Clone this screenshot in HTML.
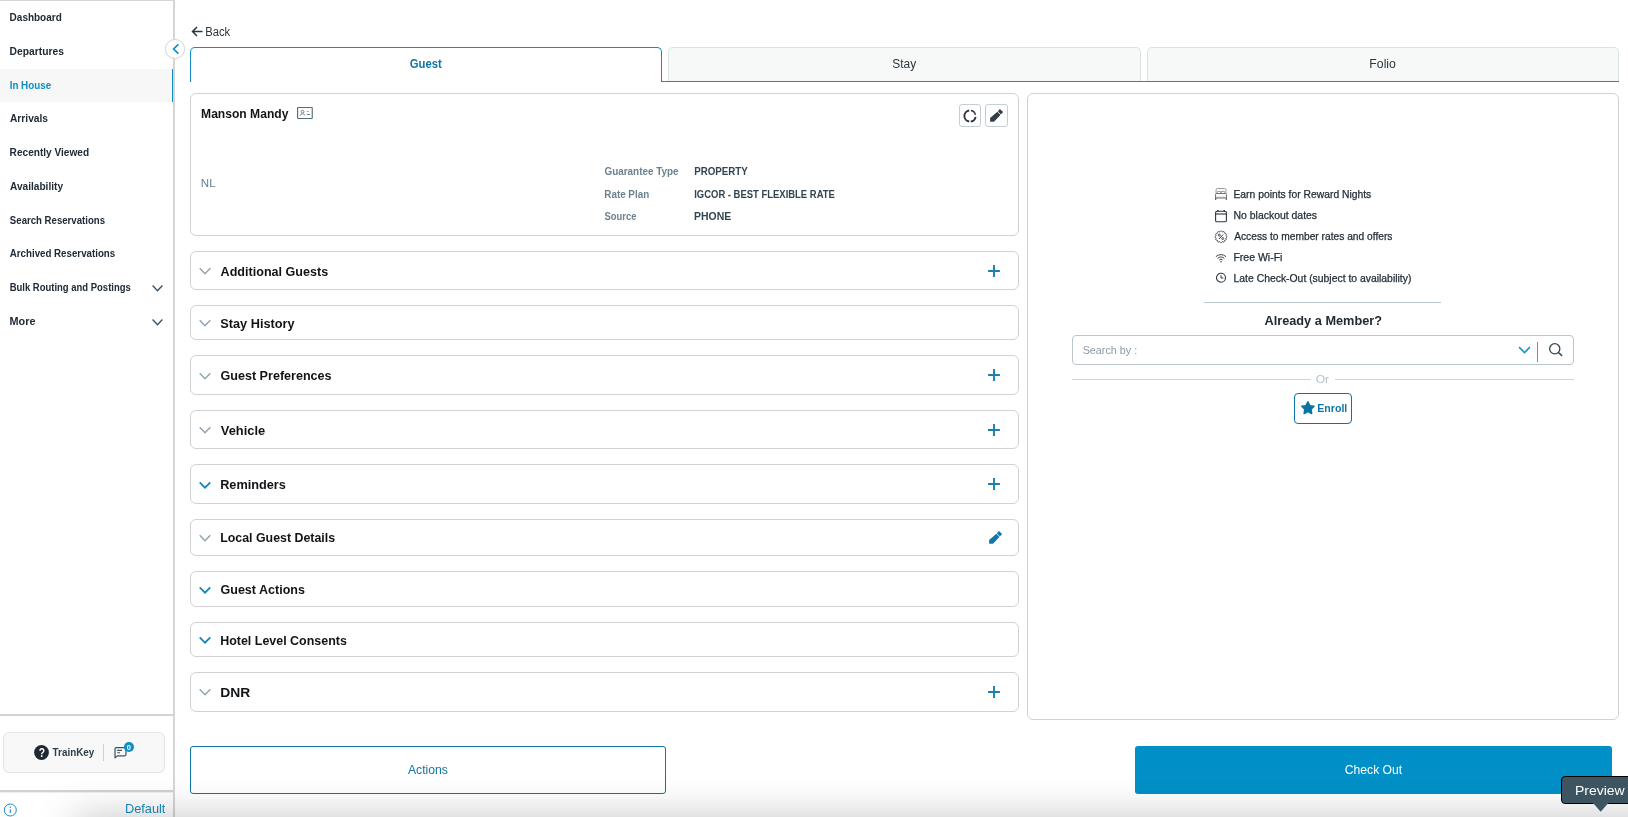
<!DOCTYPE html>
<html lang="en"><head><meta charset="utf-8"><title>Guest - In House</title>
<style>
html,body{margin:0;padding:0;background:#fff;}
body{width:1628px;height:817px;overflow:hidden;font-family:"Liberation Sans",sans-serif;}
#root{position:relative;width:1628px;height:817px;overflow:hidden;background:#fff;}
#root div,#root svg{position:absolute;box-sizing:border-box;}
.t{left:0;line-height:20px;height:20px;white-space:nowrap;transform-origin:0 50%;font-family:"Liberation Sans",sans-serif;}
.card{border:1px solid #d2d2d2;border-radius:6px;background:#fff;}
.tab{border:1px solid #dde2e3;border-bottom:none;border-radius:5px 5px 0 0;background:#f7f8f8;}
#fade{left:75px;top:817px;width:1700px;height:60px;box-shadow:0 0 40px rgba(0,0,0,0.23);pointer-events:none;}
#texts{left:0;top:0;width:1628px;height:817px;will-change:transform;}

</style></head><body>
<div id="root">
<!-- top hairline -->
<div style="left:0;top:0;width:175px;height:1px;background:#d6d6d6;"></div>
<!-- sidebar -->
<div style="left:0;top:69px;width:173px;height:33px;background:#f7f7f7;"></div>
<div style="left:171.6px;top:69px;width:1.6px;height:33px;background:#0f8dc4;"></div>
<div style="left:173px;top:0;width:2px;height:817px;background:#d5d5d5;"></div>
<div style="left:0;top:714px;width:173px;height:2px;background:#d3d3d3;"></div>
<div style="left:0;top:790px;width:173px;height:2px;background:#d1d1d1;"></div>
<div style="left:0;top:792px;width:173px;height:1px;background:#eeeeee;"></div>
<!-- sidebar chevrons -->
<svg style="left:151px;top:283px;" width="13" height="11" viewBox="0 0 13 11"><path d="M1.6 2.6 L6.5 7.8 L11.4 2.6" fill="none" stroke="#3b5068" stroke-width="1.4"/></svg>
<svg style="left:151px;top:316.9px;" width="13" height="11" viewBox="0 0 13 11"><path d="M1.6 2.6 L6.5 7.8 L11.4 2.6" fill="none" stroke="#3b5068" stroke-width="1.4"/></svg>
<!-- collapse button -->
<div style="left:165.2px;top:39px;width:19.6px;height:19.6px;border-radius:50%;background:#fff;border:1px solid #d4d4d4;"></div>
<svg style="left:168.5px;top:42.2px;" width="14" height="14" viewBox="0 0 14 14"><path d="M9.4 2.4 L4.6 7 L9.4 11.6" fill="none" stroke="#0f8dc4" stroke-width="1.7"/></svg>
<!-- trainkey box -->
<div style="left:3px;top:732px;width:162px;height:41px;background:#f8f8f8;border:1px solid #e2e7e9;border-radius:6px;"></div>
<svg style="left:34px;top:744.8px;" width="15" height="15" viewBox="0 0 15 15"><circle cx="7.5" cy="7.5" r="7.4" fill="#1f2933"/></svg>
<div style="left:103px;top:744px;width:1px;height:17px;background:#d2d2d2;"></div>
<svg style="left:113px;top:746px;" width="15" height="14" viewBox="0 0 15 14"><path d="M3.2 1.7 H11.8 Q13 1.7 13 2.9 V8.6 Q13 9.8 11.8 9.8 H4.6 L2 11.9 V2.9 Q2 1.7 3.2 1.7 Z" fill="none" stroke="#3d5561" stroke-width="1.2" stroke-linejoin="round"/><path d="M4.2 4.4 H9 M4.2 6.8 H7" stroke="#3d5561" stroke-width="1.1"/></svg>
<div style="left:123.8px;top:742.2px;width:10px;height:10px;border-radius:50%;background:#0f8dc4;"></div>
<!-- info icon -->
<svg style="left:3px;top:802.5px;" width="15" height="15" viewBox="0 0 15 15"><circle cx="7.3" cy="7" r="6" fill="none" stroke="#1b8cc4" stroke-width="1"/><path d="M7.3 6.2 V10" stroke="#1b8cc4" stroke-width="1.1"/><circle cx="7.3" cy="4.3" r="0.7" fill="#1b8cc4"/></svg>

<!-- back arrow -->
<svg style="left:190px;top:25px;" width="14" height="13" viewBox="0 0 14 13"><path d="M12.5 6.5 H2.8 M7 2 L2.5 6.5 L7 11" fill="none" stroke="#2b3640" stroke-width="1.5"/></svg>

<!-- tabs -->
<div class="tab" style="left:668px;top:47px;width:473px;height:34.5px;"></div>
<div class="tab" style="left:1147px;top:47px;width:472px;height:34.5px;"></div>
<div style="left:661px;top:80.6px;width:958px;height:1.3px;background:#0f8dc4;"></div>
<div style="left:190px;top:46.8px;width:472px;height:35.2px;border:1.3px solid #0f8dc4;border-bottom:none;border-radius:5px 5px 0 0;background:#fff;"></div>

<!-- guest card -->
<div class="card" style="left:190px;top:93px;width:829px;height:143px;"></div>
<!-- id-card icon -->
<svg style="left:296px;top:106px;" width="18" height="14" viewBox="0 0 18 14"><rect x="1.6" y="1.45" width="14.65" height="11" rx="0.6" fill="none" stroke="#566e7b" stroke-width="1.15"/><circle cx="6.5" cy="5.7" r="1.45" fill="none" stroke="#566e7b" stroke-width="0.8"/><path d="M4.2 9.7 C4.6 7.2 8.4 7.2 8.9 9.5" fill="none" stroke="#566e7b" stroke-width="0.85"/><path d="M10.5 5.5 H13" stroke="#8fa1ab" stroke-width="0.8"/><path d="M10.8 8.4 H14.2" stroke="#566e7b" stroke-width="0.9"/></svg>
<!-- card buttons -->
<div style="left:959px;top:104px;width:22px;height:23px;border:1px solid #c3ced5;border-radius:3px;background:#fff;"></div>
<div style="left:985px;top:104px;width:23px;height:23px;border:1px solid #c3ced5;border-radius:3px;background:#fff;"></div>
<svg style="left:962.3px;top:107.5px;" width="16" height="16" viewBox="0 0 16 16"><path d="M7.22 2.45 A5.6 5.6 0 0 0 7.22 13.55" fill="none" stroke="#2b3440" stroke-width="1.9"/><path d="M8.97 2.49 A5.6 5.6 0 0 1 13.48 6.84" fill="none" stroke="#2b3440" stroke-width="1.3"/><path d="M13.55 8.78 A5.6 5.6 0 0 1 8.78 13.55" fill="none" stroke="#2b3440" stroke-width="1.9"/></svg>
<svg style="left:988.9px;top:108.05px;" width="16" height="16" viewBox="0 0 16 16"><path d="M1.1 10.1 L8.4 3.7 L11.4 7 L5 13.8 L1.6 13.8 Q1.1 13.8 1.1 13.3 Z" fill="#333d47"/><path d="M8.9 3.25 L10.9 1.05 L14.1 4.1 L11.9 6.55 Z" fill="#333d47"/></svg>

<!-- right panel -->
<div class="card" style="left:1027px;top:93px;width:592px;height:627px;"></div>
<div style="left:1204px;top:301.9px;width:237px;height:1px;background:#b9c6cd;"></div>
<div style="left:1072px;top:335.3px;width:502px;height:29.5px;border:1px solid #b9c6cd;border-radius:4px;background:#fff;"></div>
<svg style="left:1517px;top:344px;" width="15" height="12" viewBox="0 0 15 12"><path d="M2.1 3.1 L7.5 8.6 L12.9 3.1" fill="none" stroke="#1593ca" stroke-width="1.5"/></svg>
<div style="left:1537px;top:342px;width:1px;height:20px;background:#7a8e99;"></div>
<svg style="left:1547px;top:342px;" width="16" height="16" viewBox="0 0 16 16"><circle cx="7.75" cy="6.8" r="5.1" fill="none" stroke="#2f4a57" stroke-width="1.3"/><path d="M11.4 10.5 L14.6 13.4" stroke="#2f4a57" stroke-width="1.5" stroke-linecap="round"/></svg>
<div style="left:1072px;top:378.7px;width:239px;height:1px;background:#cdd5d9;"></div>
<div style="left:1334.5px;top:378.7px;width:239.5px;height:1px;background:#cdd5d9;"></div>
<div style="left:1294px;top:393px;width:58px;height:31px;border:1px solid #0975a5;border-radius:4px;background:#fff;"></div>
<svg style="left:1300px;top:400px;" width="16" height="16" viewBox="0 0 16 16"><path d="M7.90 1.90 L9.84 5.63 L13.99 6.32 L11.04 9.32 L11.66 13.48 L7.90 11.60 L4.14 13.48 L4.76 9.32 L1.81 6.32 L5.96 5.63 Z" fill="#0975a5" stroke="#0975a5" stroke-width="1.5" stroke-linejoin="round"/></svg>

<!-- feature icons -->
<svg style="left:1214px;top:187px;" width="14" height="14" viewBox="0 0 14 14"><path d="M2 6.5 V3 Q2 1.5 3.5 1.5 H10.5 Q12 1.5 12 3 V6.5" fill="none" stroke="#7b8287" stroke-width="0.8"/><path d="M3.2 6.3 V5.2 Q3.2 4.4 4 4.4 H6 Q6.8 4.4 6.8 5.2 V6.3 M7.2 6.3 V5.2 Q7.2 4.4 8 4.4 H10 Q10.8 4.4 10.8 5.2 V6.3" fill="none" stroke="#7b8287" stroke-width="0.8"/><path d="M1.5 11 V7.8 Q1.5 6.5 2.8 6.5 H11.2 Q12.5 6.5 12.5 7.8 V11 Z" fill="none" stroke="#5d656b" stroke-width="0.9"/><path d="M1.8 10.3 H12.2" stroke="#9aa0a4" stroke-width="0.9"/><path d="M1.7 11 V13 M12.3 11 V13" stroke="#50585e" stroke-width="1.1"/></svg>
<svg style="left:1214px;top:208.5px;" width="14" height="14" viewBox="0 0 14 14"><rect x="1.6" y="2.3" width="10.8" height="10.5" rx="1.4" fill="none" stroke="#2e353b" stroke-width="1.1"/><path d="M1.6 5 H12.4" stroke="#2e353b" stroke-width="1.1"/><path d="M3.9 0.9 V2.6 M10.2 0.9 V2.6" stroke="#2e353b" stroke-width="1.4"/></svg>
<svg style="left:1214px;top:229.5px;" width="14" height="14" viewBox="0 0 14 14"><path d="M13.00 6.80 L12.91 7.11 L12.66 7.39 L12.34 7.65 L12.07 7.88 L11.93 8.12 L11.93 8.40 L12.05 8.74 L12.20 9.11 L12.27 9.48 L12.20 9.80 L11.96 10.02 L11.60 10.14 L11.21 10.21 L10.85 10.27 L10.61 10.41 L10.47 10.65 L10.41 11.01 L10.34 11.40 L10.22 11.76 L10.00 12.00 L9.68 12.07 L9.31 12.00 L8.94 11.85 L8.60 11.73 L8.32 11.73 L8.08 11.87 L7.85 12.14 L7.59 12.46 L7.31 12.71 L7.00 12.80 L6.69 12.71 L6.41 12.46 L6.15 12.14 L5.92 11.87 L5.68 11.73 L5.40 11.73 L5.06 11.85 L4.69 12.00 L4.32 12.07 L4.00 12.00 L3.78 11.76 L3.66 11.40 L3.59 11.01 L3.53 10.65 L3.39 10.41 L3.15 10.27 L2.79 10.21 L2.40 10.14 L2.04 10.02 L1.80 9.80 L1.73 9.48 L1.80 9.11 L1.95 8.74 L2.07 8.40 L2.07 8.12 L1.93 7.88 L1.66 7.65 L1.34 7.39 L1.09 7.11 L1.00 6.80 L1.09 6.49 L1.34 6.21 L1.66 5.95 L1.93 5.72 L2.07 5.48 L2.07 5.20 L1.95 4.86 L1.80 4.49 L1.73 4.12 L1.80 3.80 L2.04 3.58 L2.40 3.46 L2.79 3.39 L3.15 3.33 L3.39 3.19 L3.53 2.95 L3.59 2.59 L3.66 2.20 L3.78 1.84 L4.00 1.60 L4.32 1.53 L4.69 1.60 L5.06 1.75 L5.40 1.87 L5.68 1.87 L5.92 1.73 L6.15 1.46 L6.41 1.14 L6.69 0.89 L7.00 0.80 L7.31 0.89 L7.59 1.14 L7.85 1.46 L8.08 1.73 L8.32 1.87 L8.60 1.87 L8.94 1.75 L9.31 1.60 L9.68 1.53 L10.00 1.60 L10.22 1.84 L10.34 2.20 L10.41 2.59 L10.47 2.95 L10.61 3.19 L10.85 3.33 L11.21 3.39 L11.60 3.46 L11.96 3.58 L12.20 3.80 L12.27 4.12 L12.20 4.49 L12.05 4.86 L11.93 5.20 L11.93 5.48 L12.07 5.72 L12.34 5.95 L12.66 6.21 L12.91 6.49 Z" fill="none" stroke="#2b3640" stroke-width="0.9"/><path d="M9.1 4.6 L4.9 9" stroke="#2b3640" stroke-width="1"/><circle cx="5.3" cy="5.1" r="1" fill="none" stroke="#2b3640" stroke-width="0.9"/><circle cx="8.7" cy="8.5" r="1" fill="none" stroke="#2b3640" stroke-width="0.9"/></svg>
<svg style="left:1214px;top:250.5px;" width="14" height="14" viewBox="0 0 14 14"><path d="M1.86 5.71 A7.2 7.2 0 0 1 12.04 5.71 M3.56 7.41 A4.8 4.8 0 0 1 10.34 7.41 M5.18 9.03 A2.5 2.5 0 0 1 8.72 9.03" fill="none" stroke="#3a4650" stroke-width="1"/><circle cx="6.95" cy="10.8" r="0.8" fill="#3a4650"/></svg>
<svg style="left:1214px;top:271px;" width="14" height="14" viewBox="0 0 14 14"><circle cx="7" cy="6.8" r="4.5" fill="none" stroke="#2b3640" stroke-width="1.1"/><path d="M7 4.2 V7 H9.3" fill="none" stroke="#2b3640" stroke-width="1"/></svg>

<!-- bottom buttons -->
<div style="left:190px;top:746px;width:476px;height:48px;border:1px solid #0f75a5;border-radius:3px;background:#fff;"></div>
<div style="left:1135px;top:746px;width:477px;height:48px;border-radius:3px;background:#0090c7;"></div>
<!-- accordion -->
<div class="card" style="left:190px;top:251px;width:829px;height:39px;"></div>
<svg style="left:198px;top:264.0px;" width="14" height="14" viewBox="0 0 14 14"><path d="M1.7 4.3 L7 9.7 L12.3 4.3" fill="none" stroke="#8fa5b0" stroke-width="1.5"/></svg>
<svg style="left:987px;top:263.5px;" width="14" height="14" viewBox="0 0 14 14"><path d="M7 1.1 V12.9 M1.1 7 H12.9" stroke="#1a7fac" stroke-width="1.9"/></svg>
<div class="card" style="left:190px;top:305px;width:829px;height:35px;"></div>
<svg style="left:198px;top:316.0px;" width="14" height="14" viewBox="0 0 14 14"><path d="M1.7 4.3 L7 9.7 L12.3 4.3" fill="none" stroke="#8fa5b0" stroke-width="1.5"/></svg>
<div class="card" style="left:190px;top:355px;width:829px;height:40px;"></div>
<svg style="left:198px;top:368.6px;" width="14" height="14" viewBox="0 0 14 14"><path d="M1.7 4.3 L7 9.7 L12.3 4.3" fill="none" stroke="#8fa5b0" stroke-width="1.5"/></svg>
<svg style="left:987px;top:368.0px;" width="14" height="14" viewBox="0 0 14 14"><path d="M7 1.1 V12.9 M1.1 7 H12.9" stroke="#1a7fac" stroke-width="1.9"/></svg>
<div class="card" style="left:190px;top:410px;width:829px;height:39px;"></div>
<svg style="left:198px;top:423.1px;" width="14" height="14" viewBox="0 0 14 14"><path d="M1.7 4.3 L7 9.7 L12.3 4.3" fill="none" stroke="#8fa5b0" stroke-width="1.5"/></svg>
<svg style="left:987px;top:422.5px;" width="14" height="14" viewBox="0 0 14 14"><path d="M7 1.1 V12.9 M1.1 7 H12.9" stroke="#1a7fac" stroke-width="1.9"/></svg>
<div class="card" style="left:190px;top:464px;width:829px;height:40px;"></div>
<svg style="left:198px;top:478.2px;" width="14" height="14" viewBox="0 0 14 14"><path d="M1.7 4.3 L7 9.7 L12.3 4.3" fill="none" stroke="#0f86bb" stroke-width="1.7"/></svg>
<svg style="left:987px;top:477.0px;" width="14" height="14" viewBox="0 0 14 14"><path d="M7 1.1 V12.9 M1.1 7 H12.9" stroke="#1a7fac" stroke-width="1.9"/></svg>
<div class="card" style="left:190px;top:519px;width:829px;height:37px;"></div>
<svg style="left:198px;top:531.0px;" width="14" height="14" viewBox="0 0 14 14"><path d="M1.7 4.3 L7 9.7 L12.3 4.3" fill="none" stroke="#8fa5b0" stroke-width="1.5"/></svg>
<svg style="left:988px;top:530.1px;" width="16" height="16" viewBox="0 0 16 16"><path d="M1.1 10.1 L8.4 3.7 L11.4 7 L5 13.8 L1.6 13.8 Q1.1 13.8 1.1 13.3 Z" fill="#0f78a8"/><path d="M8.9 3.25 L10.9 1.05 L14.1 4.1 L11.9 6.55 Z" fill="#0f78a8"/></svg>
<div class="card" style="left:190px;top:571px;width:829px;height:36px;"></div>
<svg style="left:198px;top:583.0px;" width="14" height="14" viewBox="0 0 14 14"><path d="M1.7 4.3 L7 9.7 L12.3 4.3" fill="none" stroke="#0f86bb" stroke-width="1.7"/></svg>
<div class="card" style="left:190px;top:622px;width:829px;height:35px;"></div>
<svg style="left:198px;top:633.1px;" width="14" height="14" viewBox="0 0 14 14"><path d="M1.7 4.3 L7 9.7 L12.3 4.3" fill="none" stroke="#0f86bb" stroke-width="1.7"/></svg>
<div class="card" style="left:190px;top:672px;width:829px;height:40px;"></div>
<svg style="left:198px;top:685.1px;" width="14" height="14" viewBox="0 0 14 14"><path d="M1.7 4.3 L7 9.7 L12.3 4.3" fill="none" stroke="#8fa5b0" stroke-width="1.5"/></svg>
<svg style="left:987px;top:685.0px;" width="14" height="14" viewBox="0 0 14 14"><path d="M7 1.1 V12.9 M1.1 7 H12.9" stroke="#1a7fac" stroke-width="1.9"/></svg>
<div id="texts">
<div class="t" id="t0" style="top:7.33px;font-size:10.6px;font-weight:700;color:#212b36;transform:translateX(9.62px) scaleX(0.9421);">Dashboard</div>
<div class="t" id="t1" style="top:41.33px;font-size:10.6px;font-weight:700;color:#212b36;transform:translateX(9.59px) scaleX(0.9709);">Departures</div>
<div class="t" id="t2" style="top:75.33px;font-size:10.6px;font-weight:700;color:#0f8dc4;transform:translateX(9.67px) scaleX(0.9262);">In House</div>
<div class="t" id="t3" style="top:108.33px;font-size:10.6px;font-weight:700;color:#212b36;transform:translateX(9.99px) scaleX(0.9634);">Arrivals</div>
<div class="t" id="t4" style="top:142.33px;font-size:10.6px;font-weight:700;color:#212b36;transform:translateX(9.62px) scaleX(0.9530);">Recently Viewed</div>
<div class="t" id="t5" style="top:176.33px;font-size:10.6px;font-weight:700;color:#212b36;transform:translateX(10.00px) scaleX(0.9550);">Availability</div>
<div class="t" id="t6" style="top:210.33px;font-size:10.6px;font-weight:700;color:#212b36;transform:translateX(9.87px) scaleX(0.9076);">Search Reservations</div>
<div class="t" id="t7" style="top:243.33px;font-size:10.6px;font-weight:700;color:#212b36;transform:translateX(9.80px) scaleX(0.9177);">Archived Reservations</div>
<div class="t" id="t8" style="top:277.33px;font-size:10.6px;font-weight:700;color:#212b36;transform:translateX(9.69px) scaleX(0.8946);">Bulk Routing and Postings</div>
<div class="t" id="t9" style="top:311.33px;font-size:10.6px;font-weight:700;color:#212b36;transform:translateX(9.49px) scaleX(1.0251);">More</div>
<div class="t" id="t10" style="top:21.84px;font-size:12px;font-weight:400;color:#2b3640;transform:translateX(205.20px) scaleX(0.9368);">Back</div>
<div class="t" id="t11" style="top:53.84px;font-size:12px;font-weight:700;color:#0f75a5;transform:translateX(409.81px) scaleX(0.9414);">Guest</div>
<div class="t" id="t12" style="top:53.84px;font-size:12px;font-weight:400;color:#2b3640;transform:translateX(892.35px) scaleX(0.9917);">Stay</div>
<div class="t" id="t13" style="top:53.84px;font-size:12px;font-weight:400;color:#2b3640;transform:translateX(1369.35px) scaleX(1.0206);">Folio</div>
<div class="t" id="t14" style="top:103.50px;font-size:13px;font-weight:700;color:#111417;transform:translateX(201.06px) scaleX(0.9305);">Manson Mandy</div>
<div class="t" id="t15" style="top:173.26px;font-size:10.8px;font-weight:400;color:#668190;transform:translateX(200.86px) scaleX(1.0679);">NL</div>
<div class="t" id="t16" style="top:161.53px;font-size:10px;font-weight:700;color:#6b8390;transform:translateX(604.49px) scaleX(0.9902);">Guarantee Type</div>
<div class="t" id="t17" style="top:161.53px;font-size:10px;font-weight:700;color:#2f4550;transform:translateX(694.17px) scaleX(0.9743);">PROPERTY</div>
<div class="t" id="t18" style="top:184.53px;font-size:10px;font-weight:700;color:#6b8390;transform:translateX(604.33px) scaleX(0.9832);">Rate Plan</div>
<div class="t" id="t19" style="top:184.53px;font-size:10px;font-weight:700;color:#2f4550;transform:translateX(694.21px) scaleX(0.9457);">IGCOR - BEST FLEXIBLE RATE</div>
<div class="t" id="t20" style="top:206.53px;font-size:10px;font-weight:700;color:#6b8390;transform:translateX(604.53px) scaleX(0.9448);">Source</div>
<div class="t" id="t21" style="top:206.53px;font-size:10px;font-weight:700;color:#2f4550;transform:translateX(694.08px) scaleX(1.0436);">PHONE</div>
<div class="t" id="t22" style="top:262.32px;font-size:13.5px;font-weight:700;color:#111417;transform:translateX(220.59px) scaleX(0.9317);">Additional Guests</div>
<div class="t" id="t23" style="top:314.32px;font-size:13.5px;font-weight:700;color:#111417;transform:translateX(220.28px) scaleX(0.9434);">Stay History</div>
<div class="t" id="t24" style="top:366.32px;font-size:13.5px;font-weight:700;color:#111417;transform:translateX(220.49px) scaleX(0.9312);">Guest Preferences</div>
<div class="t" id="t25" style="top:421.32px;font-size:13.5px;font-weight:700;color:#111417;transform:translateX(220.77px) scaleX(0.9539);">Vehicle</div>
<div class="t" id="t26" style="top:475.32px;font-size:13.5px;font-weight:700;color:#111417;transform:translateX(220.14px) scaleX(0.9422);">Reminders</div>
<div class="t" id="t27" style="top:528.32px;font-size:13.5px;font-weight:700;color:#111417;transform:translateX(220.20px) scaleX(0.9172);">Local Guest Details</div>
<div class="t" id="t28" style="top:580.32px;font-size:13.5px;font-weight:700;color:#111417;transform:translateX(220.50px) scaleX(0.9273);">Guest Actions</div>
<div class="t" id="t29" style="top:631.32px;font-size:13.5px;font-weight:700;color:#111417;transform:translateX(220.19px) scaleX(0.9225);">Hotel Level Consents</div>
<div class="t" id="t30" style="top:683.32px;font-size:13.5px;font-weight:700;color:#111417;transform:translateX(220.15px) scaleX(1.0262);">DNR</div>
<div class="t" id="t31" style="top:184.36px;font-size:10.5px;font-weight:400;color:#232d38;transform:translateX(1233.48px) scaleX(0.9839);-webkit-text-stroke:0.25px #232d38;">Earn points for Reward Nights</div>
<div class="t" id="t32" style="top:205.36px;font-size:10.5px;font-weight:400;color:#232d38;transform:translateX(1233.50px) scaleX(0.9945);-webkit-text-stroke:0.25px #232d38;">No blackout dates</div>
<div class="t" id="t33" style="top:226.36px;font-size:10.5px;font-weight:400;color:#232d38;transform:translateX(1234.16px) scaleX(0.9731);-webkit-text-stroke:0.25px #232d38;">Access to member rates and offers</div>
<div class="t" id="t34" style="top:247.36px;font-size:10.5px;font-weight:400;color:#232d38;transform:translateX(1233.45px) scaleX(0.9995);-webkit-text-stroke:0.25px #232d38;">Free Wi-Fi</div>
<div class="t" id="t35" style="top:268.36px;font-size:10.5px;font-weight:400;color:#232d38;transform:translateX(1233.52px) scaleX(0.9894);-webkit-text-stroke:0.25px #232d38;">Late Check-Out (subject to availability)</div>
<div class="t" id="t36" style="top:311.32px;font-size:13.5px;font-weight:700;color:#222b33;transform:translateX(1264.47px) scaleX(0.9438);">Already a Member?</div>
<div class="t" id="t37" style="top:340.36px;font-size:10.5px;font-weight:400;color:#8a9ba5;transform:translateX(1082.63px) scaleX(1.0274);">Search by :</div>
<div class="t" id="t38" style="top:369.36px;font-size:10.5px;font-weight:400;color:#b5c0c6;transform:translateX(1315.75px) scaleX(1.1477);">Or</div>
<div class="t" id="t39" style="top:398.36px;font-size:10.5px;font-weight:700;color:#0f75a5;transform:translateX(1317.31px) scaleX(1.0079);">Enroll</div>
<div class="t" id="t40" style="top:742.05px;font-size:11.4px;font-weight:700;color:#2c3e4a;transform:translateX(52.60px) scaleX(0.8651);">TrainKey</div>
<div class="t" id="t41" style="top:743.32px;font-size:13.5px;font-weight:700;color:#ffffff;transform:translateX(38.70px) scaleX(0.7636);">?</div>
<div class="t" id="t42" style="top:737.57px;font-size:7px;font-weight:700;color:#ffffff;transform:translateX(126.70px) scaleX(1.0752);">0</div>
<div class="t" id="t43" style="top:798.63px;font-size:12.6px;font-weight:400;color:#1b8cc4;transform:translateX(124.90px) scaleX(1.0154);">Default</div>
<div class="t" id="t44" style="top:759.84px;font-size:12px;font-weight:400;color:#0f75a5;transform:translateX(407.95px) scaleX(1.0139);">Actions</div>
<div class="t" id="t45" style="top:759.84px;font-size:12px;font-weight:400;color:#ffffff;transform:translateX(1344.79px) scaleX(1.0116);">Check Out</div>
</div>
<div id="fade"></div>
<div id="tip" style="left:0;top:0;width:1628px;height:817px;will-change:transform;">
<div style="left:1561px;top:776px;width:80px;height:28px;background:#3d5560;border:1px solid #000;border-radius:4px;"></div>
<svg style="left:1591px;top:802px;" width="20" height="11" viewBox="0 0 20 11"><path d="M2.2 0 H17.2 V1.2 L9.7 9.8 L2.2 1.2 Z" fill="#3d5560"/></svg>
<div class="t" style="left:1574.9px;top:781px;font-size:13.5px;color:#fff;transform:scaleX(1.035);">Preview</div>
</div>
</div>
</body></html>
